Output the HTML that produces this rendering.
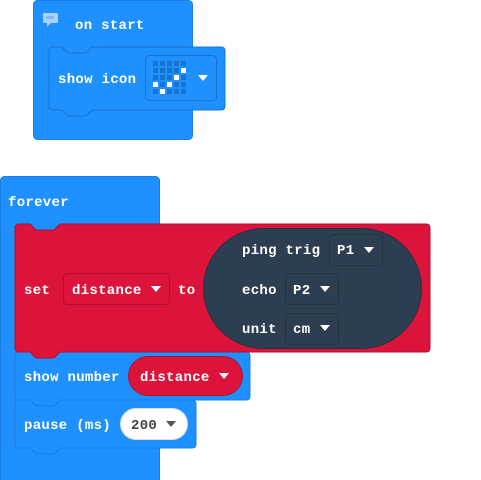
<!DOCTYPE html>
<html><head><meta charset="utf-8"><style>
html,body{margin:0;padding:0;background:#fff;width:481px;height:480px;overflow:hidden}
text{font-family:"Liberation Mono",monospace;font-weight:bold;font-size:14px;fill:#fff;letter-spacing:0.3px}
</style></head><body>
<svg width="481" height="480" xmlns="http://www.w3.org/2000/svg">
<!-- on start -->
<rect x="33.5" y="0.5" width="159" height="139" rx="4" fill="#1e90ff" stroke="#1a7ee0"/>
<rect x="43" y="13" width="15" height="10" rx="1" fill="#a9d0ff"/>
<polygon points="47,23 51,23 47,27" fill="#a9d0ff"/>
<rect x="46" y="16" width="8" height="3" fill="#7fb7f5"/>
<text x="75" y="29">on start</text>
<path d="M53,47 L62,47 L68,53 L86,53 L92,47 L221,47 Q225,47 225,51 L225,106 Q225,110 221,110 L92,110 L86,116 L68,116 L62,110 L53,110 Q49,110 49,106 L49,51 Q49,47 53,47Z" fill="#1e90ff" stroke="#1873cc"/>
<text x="58" y="83">show icon</text>
<rect x="145.5" y="55.5" width="71" height="45" rx="4" fill="#1e90ff" stroke="#1873cc"/>
<g fill="#1873cc">
<rect x="153" y="61" width="5" height="5"/><rect x="160" y="61" width="5" height="5"/><rect x="167" y="61" width="5" height="5"/><rect x="174" y="61" width="5" height="5"/><rect x="181" y="61" width="5" height="5"/>
<rect x="153" y="68" width="5" height="5"/><rect x="160" y="68" width="5" height="5"/><rect x="167" y="68" width="5" height="5"/><rect x="174" y="68" width="5" height="5"/>
<rect x="153" y="75" width="5" height="5"/><rect x="160" y="75" width="5" height="5"/><rect x="167" y="75" width="5" height="5"/><rect x="181" y="75" width="5" height="5"/>
<rect x="160" y="82" width="5" height="5"/><rect x="174" y="82" width="5" height="5"/><rect x="181" y="82" width="5" height="5"/>
<rect x="153" y="89" width="5" height="5"/><rect x="167" y="89" width="5" height="5"/><rect x="174" y="89" width="5" height="5"/><rect x="181" y="89" width="5" height="5"/>
</g>
<g fill="#fff">
<rect x="181" y="68" width="5" height="5"/><rect x="174" y="75" width="5" height="5"/><rect x="153" y="82" width="5" height="5"/><rect x="167" y="82" width="5" height="5"/><rect x="160" y="89" width="5" height="5"/>
</g>
<polygon points="198,75 208,75 203,81" fill="#fff"/>

<!-- forever -->
<rect x="0.5" y="176.5" width="159" height="310" rx="4" fill="#1e90ff" stroke="#1a7ee0"/>
<text x="8" y="206">forever</text>

<!-- pause -->
<path d="M19,400 L30,400 L36,406 L54,406 L60,400 L192,400 Q196,400 196,404 L196,444 Q196,448 192,448 L60,448 L54,454 L36,454 L30,448 L19,448 Q15,448 15,444 L15,404 Q15,400 19,400Z" fill="#1e90ff" stroke="#1a7ee0"/>
<text x="24" y="429">pause (ms)</text>
<rect x="120.5" y="408.5" width="67" height="31" rx="15.5" fill="#fff" stroke="#ddd"/>
<text x="131" y="429" style="fill:#444">200</text>
<polygon points="166,421 176,421 171,427" fill="#555"/>

<!-- show number -->
<path d="M19,352 L30,352 L36,358 L54,358 L60,352 L246,352 Q250,352 250,356 L250,396 Q250,400 246,400 L60,400 L54,406 L36,406 L30,400 L19,400 Q15,400 15,396 L15,356 Q15,352 19,352Z" fill="#1e90ff" stroke="#1a7ee0"/>
<text x="24" y="381">show number</text>
<rect x="128.5" y="356.5" width="114" height="39" rx="19.5" fill="#dc143c" stroke="#b01030"/>
<text x="140" y="381">distance</text>
<polygon points="219,373 229,373 224,379" fill="#fff"/>

<!-- set -->
<path d="M19,224 L30,224 L36,230 L54,230 L60,224 L426,224 Q430,224 430,228 L430,348 Q430,352 426,352 L60,352 L54,358 L36,358 L30,352 L19,352 Q15,352 15,348 L15,228 Q15,224 19,224Z" fill="#dc143c" stroke="#b01030"/>
<text x="24" y="294">set</text>
<rect x="63.5" y="273.5" width="106" height="31" rx="4" fill="#dc143c" stroke="#b01030"/>
<text x="72" y="294">distance</text>
<polygon points="151,286 161,286 156,292" fill="#fff"/>
<text x="178" y="294">to</text>
<rect x="203.5" y="228.5" width="218" height="120" rx="60" fill="#2d3e50" stroke="#243240"/>
<text x="242" y="254">ping trig</text>
<rect x="329.5" y="234.5" width="53" height="31" rx="4" fill="#2d3e50" stroke="#243240"/>
<text x="337" y="254">P1</text>
<polygon points="364,247 374,247 369,253" fill="#fff"/>
<text x="242" y="294">echo</text>
<rect x="285.5" y="273.5" width="53" height="31" rx="4" fill="#2d3e50" stroke="#243240"/>
<text x="293" y="294">P2</text>
<polygon points="320,286 330,286 325,292" fill="#fff"/>
<text x="242" y="333">unit</text>
<rect x="285.5" y="313.5" width="53" height="31" rx="4" fill="#2d3e50" stroke="#243240"/>
<text x="293" y="333">cm</text>
<polygon points="320,325 330,325 325,331" fill="#fff"/>
</svg>
</body></html>
